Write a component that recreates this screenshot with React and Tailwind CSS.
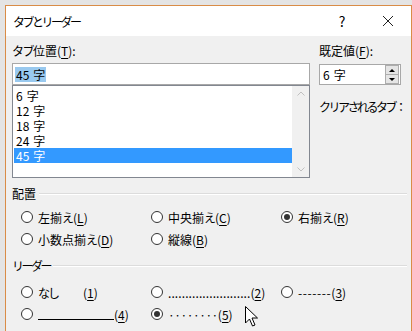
import React from 'react';

const font = { fontFamily: '"Noto Sans CJK JP", "Noto Sans", sans-serif' };

function U({ children }) {
  return <span className="underline underline-offset-2">{children}</span>;
}

function Radio({ checked }) {
  return (
    <span className="w-[12px] h-[12px] rounded-full border border-[#333] bg-white flex items-center justify-center shrink-0">
      {checked && <span className="w-[6px] h-[6px] rounded-full bg-[#333]" />}
    </span>
  );
}

function Option({ checked, children, className = '' }) {
  return (
    <div className={'flex items-center gap-[5px] w-[130px] shrink-0 ' + className}>
      <Radio checked={checked} />
      <span className="whitespace-nowrap">{children}</span>
    </div>
  );
}

function GroupLabel({ children }) {
  return (
    <div className="flex items-center h-[15px] pr-[4px]">
      <span>{children}</span>
      <div className="flex-1 ml-[3px] border-t border-[#dcdcdc] border-b border-b-white" />
    </div>
  );
}

function Stop({ n }) {
  return (
    <>
      {n}<span className="ml-[4px]">字</span>
    </>
  );
}

const stops = ['6', '12', '18', '24', '45'];

export default function App() {
  return (
    <div className="w-[412px] h-[331px] overflow-hidden bg-[#e4e4e4] pt-[5px] pl-[5px] pr-[3px] flex relative text-[12px] leading-[15px] text-black" style={font}>
      <div className="flex-1 border border-b-0 border-[#d98c47] flex flex-col">
        <div className="h-[30px] bg-white flex items-center shrink-0">
          <span className="pl-[7px] flex-1 tracking-[-2.5px]">タブとリーダー</span>
          <span className="w-[46px] text-center text-[14px]">?</span>
          <span className="w-[46px] flex justify-center">
            <svg width="12" height="12" viewBox="0 0 12 12" stroke="#222" strokeWidth="1">
              <path d="M1 1 L11 11 M11 1 L1 11" />
            </svg>
          </span>
        </div>
        <div className="flex-1 bg-[#f0f0f0] pl-[6px] pt-[7px] flex flex-col">
          <div className="flex gap-[9px]">
            <div className="w-[298px] shrink-0 flex flex-col">
              <span><span className="tracking-[-1.5px]">タブ</span>位置(<U>T</U>):</span>
              <div className="mt-[5px] h-[22px] border border-[#a8a8a8] bg-white flex items-center pl-[2px]">
                <span className="bg-[#99c9ef] px-[1px]"><Stop n="45" /></span>
              </div>
              <div className="h-[93px] border border-[#828790] bg-white flex">
                <div className="flex-1 pt-[2px] pl-[1px]">
                  {stops.map((s, i) => (
                    <div key={s} className={'h-[15px] pl-[2px] ' + (i === 4 ? 'bg-[#3399ff] text-white' : '')}><Stop n={s} /></div>
                  ))}
                </div>
                <div className="w-[17px] bg-[#f0f0f0] flex flex-col justify-between items-center py-[5px]">
                  <svg width="8" height="5" viewBox="0 0 8 5" fill="none" stroke="#c0c0c0"><path d="M0.5 4.5 L4 1 L7.5 4.5" /></svg>
                  <svg width="8" height="5" viewBox="0 0 8 5" fill="none" stroke="#c0c0c0"><path d="M0.5 0.5 L4 4 L7.5 0.5" /></svg>
                </div>
              </div>
            </div>
            <div className="flex flex-col min-w-0">
              <span className="whitespace-nowrap">既定値(<U>F</U>):</span>
              <div className="mt-[6px] w-[82px] h-[21px] border border-[#a8a8a8] bg-white flex items-center pl-[3px]">
                <span className="flex-1"><Stop n="6" /></span>
                <div className="w-[14px] h-[19px] flex flex-col mr-[1px]">
                  <div className="flex-1 border border-[#adadad] bg-[#e5e5e5] flex items-center justify-center">
                    <svg width="6" height="3" viewBox="0 0 6 3"><path d="M0 3 L3 0 L6 3 Z" fill="#000" /></svg>
                  </div>
                  <div className="flex-1 border border-t-0 border-[#adadad] bg-[#e5e5e5] flex items-center justify-center">
                    <svg width="6" height="3" viewBox="0 0 6 3"><path d="M0 0 L6 0 L3 3 Z" fill="#000" /></svg>
                  </div>
                </div>
              </div>
              <span className="mt-[14px] whitespace-nowrap tracking-[-2.5px]">クリアされるタブ：</span>
            </div>
          </div>

          <div className="mt-[8px]">
            <GroupLabel>配置</GroupLabel>
          </div>
          <div className="pl-[9px] mt-[5px]">
            <div className="flex h-[22px] items-center">
              <Option>左揃<span className="tracking-[-1px]">え</span>(<U>L</U>)</Option>
              <Option>中央揃<span className="tracking-[-1px]">え</span>(<U>C</U>)</Option>
              <Option checked>右揃<span className="tracking-[-1px]">え</span>(<U>R</U>)</Option>
            </div>
            <div className="flex h-[22px] items-center">
              <Option>小数点揃<span className="tracking-[-1px]">え</span>(<U>D</U>)</Option>
              <Option>縦線(<U>B</U>)</Option>
            </div>
          </div>

          <div className="mt-[8px]">
            <GroupLabel><span className="tracking-[-2.5px]">リーダー</span></GroupLabel>
          </div>
          <div className="pl-[9px] mt-[8px]">
            <div className="flex h-[22px] items-center">
              <Option><span className="tracking-[-2px]">なし</span><span className="ml-[25px]">(<U>1</U>)</span></Option>
              <Option><span className="tracking-[0.1px]">........................</span>(<U>2</U>)</Option>
              <Option><span className="tracking-[0.6px]">-------</span>(<U>3</U>)</Option>
            </div>
            <div className="flex h-[22px] items-center">
              <Option><span className="inline-block w-[76px] h-[11px] border-b border-black align-baseline" />(<U>4</U>)</Option>
              <Option checked><span className="tracking-[-0.5px]">········</span>(<U>5</U>)</Option>
            </div>
          </div>
        </div>
      </div>
      <svg className="absolute left-[245px] top-[306px]" width="13" height="21" viewBox="0 0 13 21">
        <path d="M0.5 0.5 L0.5 17 L4.5 13 L7.5 20 L10 19 L7 12 L12.5 12 Z" fill="#fff" stroke="#000" strokeWidth="1" />
      </svg>
    </div>
  );
}
